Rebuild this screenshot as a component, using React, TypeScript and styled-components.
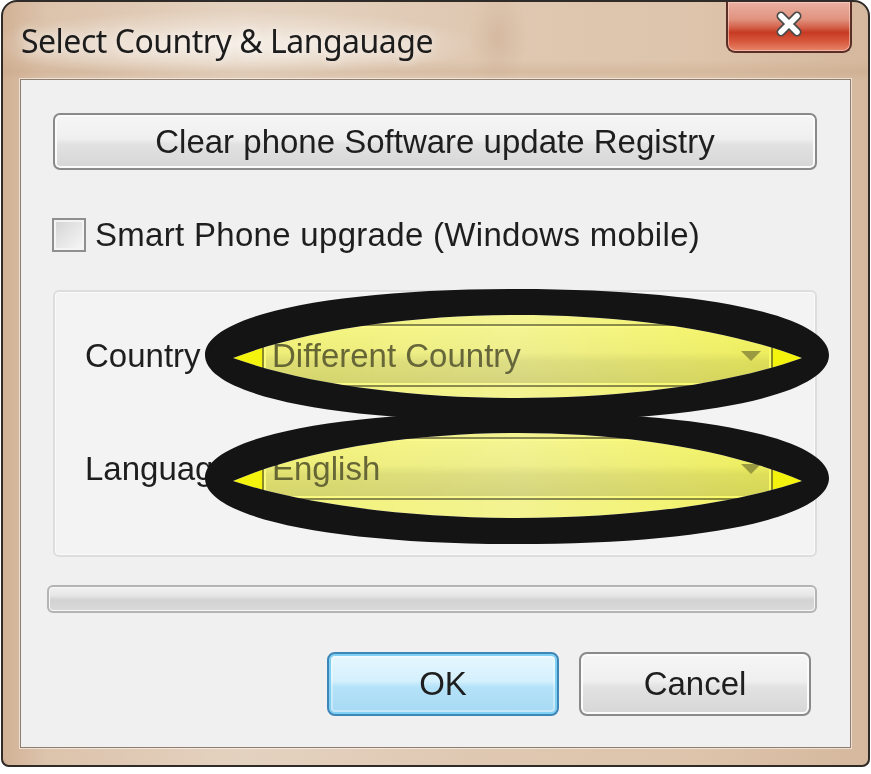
import styled, { createGlobalStyle } from "styled-components";

const GlobalStyle = createGlobalStyle`
  html, body {
    margin: 0;
    padding: 0;
    background: #ffffff;
  }
  body {
    font-family: "Liberation Sans", Arial, sans-serif;
  }
`;

const Window = styled.div`
  box-sizing: border-box;
  width: 869px;
  height: 767px;
  margin-left: 1px;
  border: 2px solid #2e2b28;
  border-radius: 16px 16px 8px 8px;
  padding: 0 17px 17px 17px;
  display: flex;
  flex-direction: column;
  background:
    radial-gradient(ellipse 250px 34px at 230px 42px, rgba(248, 242, 235, 0.85), transparent),
    radial-gradient(ellipse 30px 50px at 495px 35px, rgba(196, 160, 128, 0.35), transparent),
    linear-gradient(180deg, transparent 0, transparent 58px, rgba(196, 160, 126, 0.3) 70px, transparent 79px),
    linear-gradient(90deg, #d2b296 0%, #dcc3ac 5%, #e4d2c0 28%, #dfc8b2 55%, #ddc4ab 80%, #d5b89e 100%);
`;

const TitleBar = styled.div`
  height: 77px;
  display: flex;
  justify-content: space-between;
  align-items: flex-start;
`;

const Title = styled.div`
  margin: 17px 0 0 1px;
  font-family: "Noto Sans", "Open Sans", sans-serif;
  font-size: 32px;
  letter-spacing: -0.5px;
  color: #1c1c1c;
  text-shadow: 0 0 12px rgba(255, 255, 255, 0.9);
`;

const CloseButton = styled.div`
  box-sizing: border-box;
  width: 126px;
  height: 51px;
  margin-right: -1px;
  border: 2px solid #5a2d25;
  border-top: none;
  border-radius: 0 0 9px 9px;
  display: flex;
  align-items: center;
  justify-content: center;
  padding-bottom: 6px;
  background: linear-gradient(
    180deg,
    #eab0a2 0%,
    #e1937f 35%,
    #d4604a 52%,
    #c63a22 62%,
    #d6583c 80%,
    #e8866c 100%
  );
  box-shadow: inset 0 0 0 1px rgba(255, 220, 210, 0.55);
`;

const Client = styled.div`
  flex: 1;
  display: flex;
  flex-direction: column;
  border: 1px solid #8f7d6d;
  background: #f0f0f0;
  padding: 33px 33px 0 32px;
  box-shadow: 0 0 0 1px rgba(255, 255, 255, 0.55);
`;

const WideButton = styled.div`
  box-sizing: border-box;
  height: 57px;
  border: 2px solid #8a8a8a;
  border-radius: 7px;
  display: flex;
  align-items: center;
  justify-content: center;
  font-size: 33px;
  color: #1e1e1e;
  background: linear-gradient(180deg, #f6f6f6 0%, #efefef 45%, #e2e2e2 55%, #d6d6d6 100%);
  box-shadow: inset 0 0 0 2px #fbfbfb;
`;

const CheckRow = styled.div`
  margin-top: 46px;
  margin-left: -1px;
  display: flex;
  align-items: center;
  gap: 9px;
  font-size: 33px;
  letter-spacing: 0.3px;
  color: #1e1e1e;
`;

const CheckBox = styled.div`
  box-sizing: border-box;
  width: 34px;
  height: 34px;
  border: 2px solid #8e8f8f;
  background: linear-gradient(135deg, #d2d2d2 0%, #e6e6e6 50%, #f7f7f7 100%);
  box-shadow: inset 0 0 0 2px #f4f4f4;
`;

const Group = styled.div`
  position: relative;
  box-sizing: border-box;
  margin-top: 36px;
  height: 267px;
  border: 2px solid #dddddd;
  border-radius: 6px;
  background: #f3f3f3;
  box-shadow: inset 0 0 0 1px #fafafa;
  padding: 32px 0 0 30px;
  display: grid;
  grid-template-columns: 177px 511px;
  grid-auto-rows: 63px;
  row-gap: 50px;
  align-items: center;
`;

const Label = styled.div`
  font-size: 33px;
  color: #1e1e1e;
`;

const Combo = styled.div`
  box-sizing: border-box;
  height: 63px;
  border: 2px solid #8a8a8a;
  border-radius: 4px;
  padding: 0 10px 0 8px;
  display: flex;
  align-items: center;
  justify-content: space-between;
  font-size: 33px;
  color: #666666;
  background: linear-gradient(180deg, #f5f5f5 0%, #eeeeee 45%, #dedede 60%, #d4d4d4 100%);
  box-shadow: inset 0 0 0 2px #f9f9f9;
`;

const Arrow = styled.div`
  width: 0;
  height: 0;
  border-left: 10px solid transparent;
  border-right: 10px solid transparent;
  border-top: 10px solid #9a9a9a;
`;

const Overlay = styled.svg<{ $blend?: boolean }>`
  position: absolute;
  left: -2px;
  top: -2px;
  overflow: visible;
  pointer-events: none;
  mix-blend-mode: ${(p) => (p.$blend ? "multiply" : "normal")};
`;

const Progress = styled.div`
  box-sizing: border-box;
  margin-top: 28px;
  margin-left: -6px;
  height: 28px;
  border: 2px solid #b4b4b4;
  border-radius: 6px;
  background: linear-gradient(180deg, #f2f2f2 0%, #e6e6e6 35%, #d2d2d2 55%, #dadada 100%);
  box-shadow: inset 0 0 0 1px #f7f7f7;
`;

const ButtonRow = styled.div`
  margin-top: 39px;
  margin-right: 6px;
  display: flex;
  justify-content: flex-end;
  gap: 20px;
`;

const DialogButton = styled.div<{ $primary?: boolean }>`
  box-sizing: border-box;
  width: 232px;
  height: 64px;
  border-radius: 8px;
  display: flex;
  align-items: center;
  justify-content: center;
  font-size: 33px;
  color: #1e1e1e;
  border: 2px solid ${(p) => (p.$primary ? "#3d86b8" : "#8a8a8a")};
  background: ${(p) =>
    p.$primary
      ? "linear-gradient(180deg, #e6f7fe 0%, #d4f0fd 45%, #b4e2f8 55%, #a6d9f3 100%)"
      : "linear-gradient(180deg, #f6f6f6 0%, #efefef 45%, #e2e2e2 55%, #d6d6d6 100%)"};
  box-shadow: ${(p) =>
    p.$primary
      ? "inset 0 0 0 2px #7fd0f2, inset 0 0 0 4px rgba(255,255,255,0.35)"
      : "inset 0 0 0 2px #fbfbfb"};
`;

// pointed lens cut out of the marker ring
const lens = (tipY: number, top: number, bottom: number) => {
  const c1 = (8 * top - 2 * tipY) / 6;
  const c2 = (8 * bottom - 2 * tipY) / 6;
  return (
    `M 180 ${tipY} C 330 ${c1} 600 ${c1} 749 ${tipY} ` +
    `C 600 ${c2} 330 ${c2} 180 ${tipY} Z`
  );
};

// ring drawn round a combo: outer ellipse, pointed lens cut out
const ring = (cy: number, ry: number, lensTop: number, lensBottom: number) => {
  const cx = 464;
  const rx = 312;
  const k = 0.6;
  const outer =
    `M ${cx - rx} ${cy} ` +
    `C ${cx - rx} ${cy - ry * k} ${cx - rx * k} ${cy - ry} ${cx} ${cy - ry} ` +
    `C ${cx + rx * k} ${cy - ry} ${cx + rx} ${cy - ry * k} ${cx + rx} ${cy} ` +
    `C ${cx + rx} ${cy + ry * k} ${cx + rx * k} ${cy + ry} ${cx} ${cy + ry} ` +
    `C ${cx - rx * k} ${cy + ry} ${cx - rx} ${cy + ry * k} ${cx - rx} ${cy} Z`;
  return { outer, lens: lens(cy + 3, lensTop, lensBottom) };
};

const rings = [ring(65, 66, 25, 108), ring(188, 66, 143, 228)];

export default function App() {
  return (
    <>
      <GlobalStyle />
      <Window>
        <TitleBar>
          <Title>Select Country &amp; Langauage</Title>
          <CloseButton>
            <svg width="30" height="26" viewBox="0 0 30 26">
              <path d="M7 5 L23 21 M23 5 L7 21" stroke="#4a4a4a" strokeWidth="9" strokeLinecap="round" />
              <path d="M7 5 L23 21 M23 5 L7 21" stroke="#ffffff" strokeWidth="5.5" strokeLinecap="round" />
            </svg>
          </CloseButton>
        </TitleBar>
        <Client>
          <WideButton>Clear phone Software update Registry</WideButton>
          <CheckRow>
            <CheckBox />
            Smart Phone upgrade (Windows mobile)
          </CheckRow>
          <Group>
            <Label>Country</Label>
            <Combo>
              Different Country
              <Arrow />
            </Combo>
            <Label>Language</Label>
            <Combo>
              English
              <Arrow />
            </Combo>
            <Overlay $blend width="765" height="267" viewBox="0 0 765 267">
              <defs>
                <linearGradient id="hl" x1="180" x2="749" y1="0" y2="0" gradientUnits="userSpaceOnUse">
                  <stop offset="0" stopColor="#ffff00" stopOpacity="0.95" />
                  <stop offset="0.05" stopColor="#ffff00" stopOpacity="0.95" />
                  <stop offset="0.055" stopColor="#ffff00" stopOpacity="0.5" />
                  <stop offset="0.5" stopColor="#ffff00" stopOpacity="0.4" />
                  <stop offset="0.945" stopColor="#ffff00" stopOpacity="0.6" />
                  <stop offset="0.95" stopColor="#ffff00" stopOpacity="0.95" />
                  <stop offset="1" stopColor="#ffff00" stopOpacity="0.95" />
                </linearGradient>
              </defs>
              {rings.map((r, i) => (
                <path key={i} d={r.lens} fill="url(#hl)" />
              ))}
            </Overlay>
            <Overlay width="765" height="267" viewBox="0 0 765 267">
              {rings.map((r, i) => (
                <path key={i} d={`${r.outer} ${r.lens}`} fill="#141414" fillRule="evenodd" />
              ))}
            </Overlay>
          </Group>
          <Progress />
          <ButtonRow>
            <DialogButton $primary>OK</DialogButton>
            <DialogButton>Cancel</DialogButton>
          </ButtonRow>
        </Client>
      </Window>
    </>
  );
}
